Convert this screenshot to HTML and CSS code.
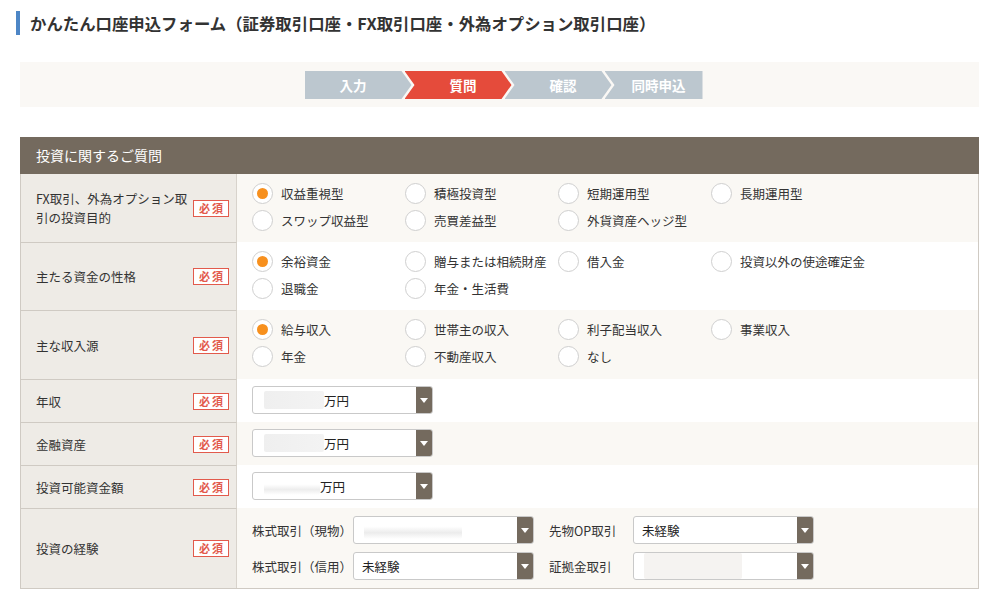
FILE: index.html
```html
<!DOCTYPE html>
<html lang="ja">
<head>
<meta charset="utf-8">
<title>かんたん口座申込フォーム</title>
<link rel="stylesheet" href="styles.css">
</head>
<body>
<h1 class="title">かんたん口座申込フォーム（証券取引口座・FX取引口座・外為オプション取引口座）</h1>

<div class="steps-band">
  <ol class="steps">
    <li class="step first">入力</li>
    <li class="step current">質問</li>
    <li class="step">確認</li>
    <li class="step last">同時申込</li>
  </ol>
</div>

<div class="form-table">
  <div class="table-head">投資に関するご質問</div>

  <div class="row tint">
    <div class="label"><span class="label-text">FX取引、外為オプション取引の投資目的</span><span class="req">必須</span></div>
    <div class="field radios">
      <label class="radio"><span class="dot on"></span>収益重視型</label>
      <label class="radio"><span class="dot"></span>積極投資型</label>
      <label class="radio"><span class="dot"></span>短期運用型</label>
      <label class="radio"><span class="dot"></span>長期運用型</label>
      <label class="radio"><span class="dot"></span>スワップ収益型</label>
      <label class="radio"><span class="dot"></span>売買差益型</label>
      <label class="radio"><span class="dot"></span>外貨資産ヘッジ型</label>
    </div>
  </div>

  <div class="row">
    <div class="label"><span class="label-text">主たる資金の性格</span><span class="req">必須</span></div>
    <div class="field radios">
      <label class="radio"><span class="dot on"></span>余裕資金</label>
      <label class="radio"><span class="dot"></span>贈与または相続財産</label>
      <label class="radio"><span class="dot"></span>借入金</label>
      <label class="radio"><span class="dot"></span>投資以外の使途確定金</label>
      <label class="radio"><span class="dot"></span>退職金</label>
      <label class="radio"><span class="dot"></span>年金・生活費</label>
    </div>
  </div>

  <div class="row tint">
    <div class="label"><span class="label-text">主な収入源</span><span class="req">必須</span></div>
    <div class="field radios tall">
      <label class="radio"><span class="dot on"></span>給与収入</label>
      <label class="radio"><span class="dot"></span>世帯主の収入</label>
      <label class="radio"><span class="dot"></span>利子配当収入</label>
      <label class="radio"><span class="dot"></span>事業収入</label>
      <label class="radio"><span class="dot"></span>年金</label>
      <label class="radio"><span class="dot"></span>不動産収入</label>
      <label class="radio"><span class="dot"></span>なし</label>
    </div>
  </div>

  <div class="row">
    <div class="label"><span class="label-text">年収</span><span class="req">必須</span></div>
    <div class="field single">
      <div class="select"><span class="value"><span class="mask m1"></span>万円</span><span class="arrow"></span></div>
    </div>
  </div>

  <div class="row tint">
    <div class="label"><span class="label-text">金融資産</span><span class="req">必須</span></div>
    <div class="field single">
      <div class="select"><span class="value"><span class="mask m2"></span>万円</span><span class="arrow"></span></div>
    </div>
  </div>

  <div class="row">
    <div class="label"><span class="label-text">投資可能資金額</span><span class="req">必須</span></div>
    <div class="field single">
      <div class="select"><span class="value"><span class="mask m3"></span>万円</span><span class="arrow"></span></div>
    </div>
  </div>

  <div class="row tint">
    <div class="label"><span class="label-text">投資の経験</span><span class="req">必須</span></div>
    <div class="field experience">
      <span class="exp-label">株式取引（現物）</span>
      <div class="select"><span class="value"><span class="mask m4"></span></span><span class="arrow"></span></div>
      <span class="exp-label second">先物OP取引</span>
      <div class="select"><span class="value">未経験</span><span class="arrow"></span></div>
      <span class="exp-label">株式取引（信用）</span>
      <div class="select"><span class="value">未経験</span><span class="arrow"></span></div>
      <span class="exp-label second">証拠金取引</span>
      <div class="select"><span class="value"><span class="mask m5"></span></span><span class="arrow"></span></div>
    </div>
  </div>
</div>
</body>
</html>
```

FILE: styles.css
```css
* { box-sizing: border-box; }

body {
  margin: 0;
  background: #fff;
  color: #333;
  font-family: "Noto Sans CJK JP", "Noto Sans", sans-serif;
  font-size: 12.5px;
}

.title {
  margin: 11px 0 0 16px;
  padding-left: 10px;
  border-left: 4px solid #4d86c6;
  font-size: 16.4px;
  line-height: 24px;
  font-weight: 700;
  color: #333;
}

.steps-band {
  margin: 27px 10px 0 20px;
  height: 45px;
  padding: 9px 0 0 8px;
  background: #faf8f5;
  display: flex;
  justify-content: center;
}

.steps {
  list-style: none;
  margin: 0;
  padding: 0;
  display: flex;
  height: 28px;
}

.step {
  width: 107px;
  height: 28px;
  margin-right: -7px;
  background: #bcc7cf;
  color: #fff;
  font-weight: 700;
  font-size: 13.5px;
  line-height: 28px;
  text-align: center;
  padding-left: 10px;
  clip-path: polygon(0 0, 97px 0, 107px 50%, 97px 100%, 0 100%, 10px 50%);
}

.step.first {
  padding-left: 0;
  padding-right: 10px;
  clip-path: polygon(0 0, 97px 0, 107px 50%, 97px 100%, 0 100%);
}

.step.last {
  width: 98px;
  margin-right: 0;
  clip-path: polygon(0 0, 100% 0, 100% 100%, 0 100%, 10px 50%);
}

.step.current { background: #e54b3b; }

.form-table {
  margin: 30px 10px 0 20px;
  border-left: 1px solid #cfcac3;
  border-right: 1px solid #cfcac3;
  border-bottom: 1px solid #cfcac3;
}

.table-head {
  height: 37px;
  line-height: 37px;
  background: #746a5e;
  color: #fff;
  font-size: 14px;
  margin-left: -1px;
  margin-right: -1px;
  padding-left: 16px;
}

.row {
  display: flex;
  background: #fff;
}

.row.tint { background: #faf8f4; }

.label {
  width: 216px;
  flex: none;
  display: flex;
  align-items: center;
  justify-content: space-between;
  padding: 0 7px 0 15px;
  background: #eeebe6;
  border-right: 1px solid #d8d3cc;
  border-top: 1px solid #cfcac3;
  color: #333;
  line-height: 19px;
}

.table-head + .row .label { border-top: none; }

.label-text { width: 152px; }

.req {
  flex: none;
  width: 36px;
  height: 17px;
  border: 1px solid #e25a4c;
  color: #e25a4c;
  font-size: 11px;
  font-weight: 700;
  line-height: 15px;
  text-align: center;
  letter-spacing: 2px;
  padding-left: 2px;
  background: #fff;
}

.field {
  flex: 1;
  padding-left: 15px;
}

.radios {
  display: grid;
  grid-template-columns: repeat(4, 153px);
  grid-auto-rows: 21px;
  row-gap: 6px;
  padding-top: 9px;
  padding-bottom: 11px;
}

.radios.tall { padding-bottom: 12px; }

.radio {
  display: flex;
  align-items: center;
  gap: 8px;
  white-space: nowrap;
  color: #333;
}

.dot {
  width: 21px;
  height: 21px;
  border-radius: 50%;
  border: 1px solid #cfcfcf;
  background: #fff;
  flex: none;
  display: flex;
  align-items: center;
  justify-content: center;
}

.dot.on::after {
  content: "";
  width: 11px;
  height: 11px;
  border-radius: 50%;
  background: #f7901e;
}

.single {
  padding-top: 7px;
  padding-bottom: 8px;
}

.select {
  width: 181px;
  height: 28px;
  border: 1px solid #c9c9c9;
  border-radius: 3px;
  background: #fff;
  display: flex;
  overflow: hidden;
}

.value {
  flex: 1;
  display: flex;
  align-items: center;
  padding-left: 8px;
  font-size: 12.5px;
  color: #222;
}

.arrow {
  width: 16px;
  flex: none;
  background: #746a5e;
  display: flex;
  align-items: center;
  justify-content: center;
}

.arrow::after {
  content: "";
  border-left: 4px solid transparent;
  border-right: 4px solid transparent;
  border-top: 5px solid #fff;
}

.mask {
  display: inline-block;
  height: 18px;
  border-radius: 2px;
  background: linear-gradient(to right, #efefef, #f3f3f3);
}

.m1 { width: 60px; margin-left: 3px; }
.m2 { width: 60px; margin-left: 3px; }
.m3 { width: 56px; margin-left: 3px; background: linear-gradient(to bottom, #fff 40%, #ededed 70%, #fff); }
.m4 { width: 98px; margin-left: 2px; background: linear-gradient(to bottom, #fff 30%, #ececec 65%, #fff); }
.m5 { width: 98px; margin-left: 2px; height: 26px; background: #f5f3f1; }

.experience {
  display: grid;
  grid-template-columns: 101px 181px 99px 181px;
  grid-auto-rows: 28px;
  row-gap: 8px;
  align-items: center;
  padding-top: 8px;
  padding-bottom: 8px;
}

.exp-label {
  white-space: nowrap;
  color: #333;
}

.exp-label.second { padding-left: 15px; }
```
